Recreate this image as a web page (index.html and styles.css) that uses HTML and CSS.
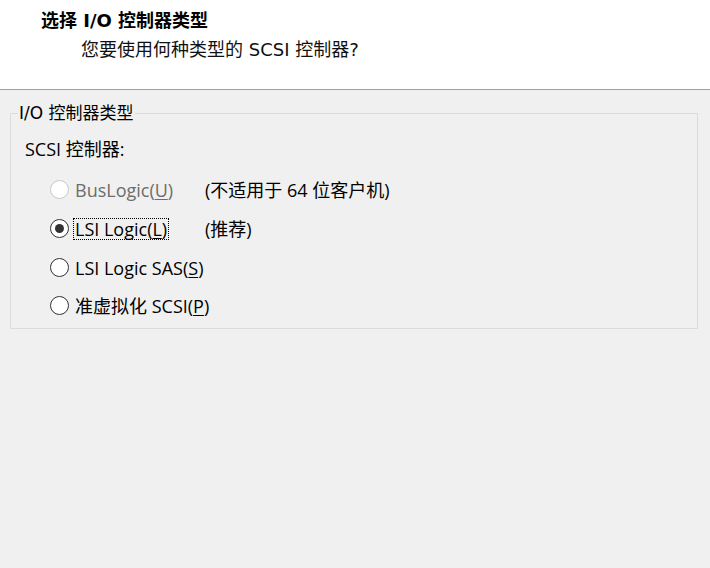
FILE: index.html
```html
<!DOCTYPE html>
<html lang="zh-CN">
<head>
<meta charset="utf-8">
<title>选择 I/O 控制器类型</title>
<link rel="stylesheet" href="styles.css">
</head>
<body>
<div class="header">
  <div class="title">选择 I/O 控制器类型</div>
  <div class="subtitle">您要使用何种类型的 SCSI 控制器?</div>
</div>
<fieldset class="group">
  <legend class="legend">I/O 控制器类型</legend>
  <div class="caption">SCSI 控制器:</div>
  <div class="options">
    <div class="row">
      <span class="radio disabled"></span>
      <span class="label disabled-text">BusLogic(<u>U</u>)</span>
      <span class="note">(不适用于 64 位客户机)</span>
    </div>
    <div class="row">
      <span class="radio checked"></span>
      <span class="label"><span class="focus">LSI Logic(<u>L</u>)</span></span>
      <span class="note">(推荐)</span>
    </div>
    <div class="row">
      <span class="radio"></span>
      <span class="label">LSI Logic SAS(<u>S</u>)</span>
    </div>
    <div class="row">
      <span class="radio"></span>
      <span class="label">准虚拟化 SCSI(<u>P</u>)</span>
    </div>
  </div>
</fieldset>
</body>
</html>
```
FILE: styles.css
```css
html, body {
  margin: 0;
  padding: 0;
}
body {
  background: #f0f0f0;
  width: 710px;
  height: 568px;
  font-family: "Open Sans", "Noto Sans CJK SC", sans-serif;
  font-size: 18px;
  color: #000;
}
.header {
  background: #fff;
  box-sizing: border-box;
  height: 90px;
  border-bottom: 1px solid #a0a0a0;
  padding-top: 10px;
}
.title {
  font-family: "DejaVu Sans", "Noto Sans CJK SC", sans-serif;
  font-weight: bold;
  font-size: 18px;
  line-height: 22px;
  padding-left: 41px;
}
.subtitle {
  font-family: "DejaVu Sans", "Noto Sans CJK SC", sans-serif;
  font-size: 18px;
  line-height: 22px;
  padding-left: 81px;
  margin-top: 7px;
  color: #111;
}
.group {
  margin: 13px 0 0 10px;
  width: 688px;
  box-sizing: border-box;
  border: 1px solid #dcdcdc;
  padding: 0 0 0 7px;
  height: 226px;
}
.legend {
  padding: 0 1px;
  line-height: 20px;
  font-family: "DejaVu Sans", "Noto Sans CJK SC", sans-serif;
  font-size: 17px;
  margin-top: 2px;
}
.caption {
  margin-top: 16px;
  margin-left: 7px;
  line-height: 20px;
}
.options {
  margin-top: 11px;
  margin-left: 32px;
  display: flex;
  flex-direction: column;
}
.row {
  display: grid;
  grid-template-columns: 19px 136px auto;
  align-items: center;
  height: 39px;
  white-space: nowrap;
}
.row:last-child {
  height: 37px;
}
.radio {
  width: 19px;
  height: 19px;
  box-sizing: border-box;
  border: 1px solid #333;
  border-radius: 50%;
  background: #fff;
  display: flex;
  align-items: center;
  justify-content: center;
}
.radio.disabled {
  border-color: #c8c8c8;
}
.radio.checked::after {
  content: "";
  width: 9px;
  height: 9px;
  border-radius: 50%;
  background: #333;
}
.label {
  padding-left: 6px;
  line-height: 20px;
}
.focus {
  display: inline-block;
  margin-left: -2px;
  padding: 0 1px;
  border: 1px dotted #000;
  line-height: 20px;
}
.disabled-text {
  color: #6d6d6d;
}
.note {
  line-height: 20px;
}
u {
  text-underline-offset: 2px;
}
```
